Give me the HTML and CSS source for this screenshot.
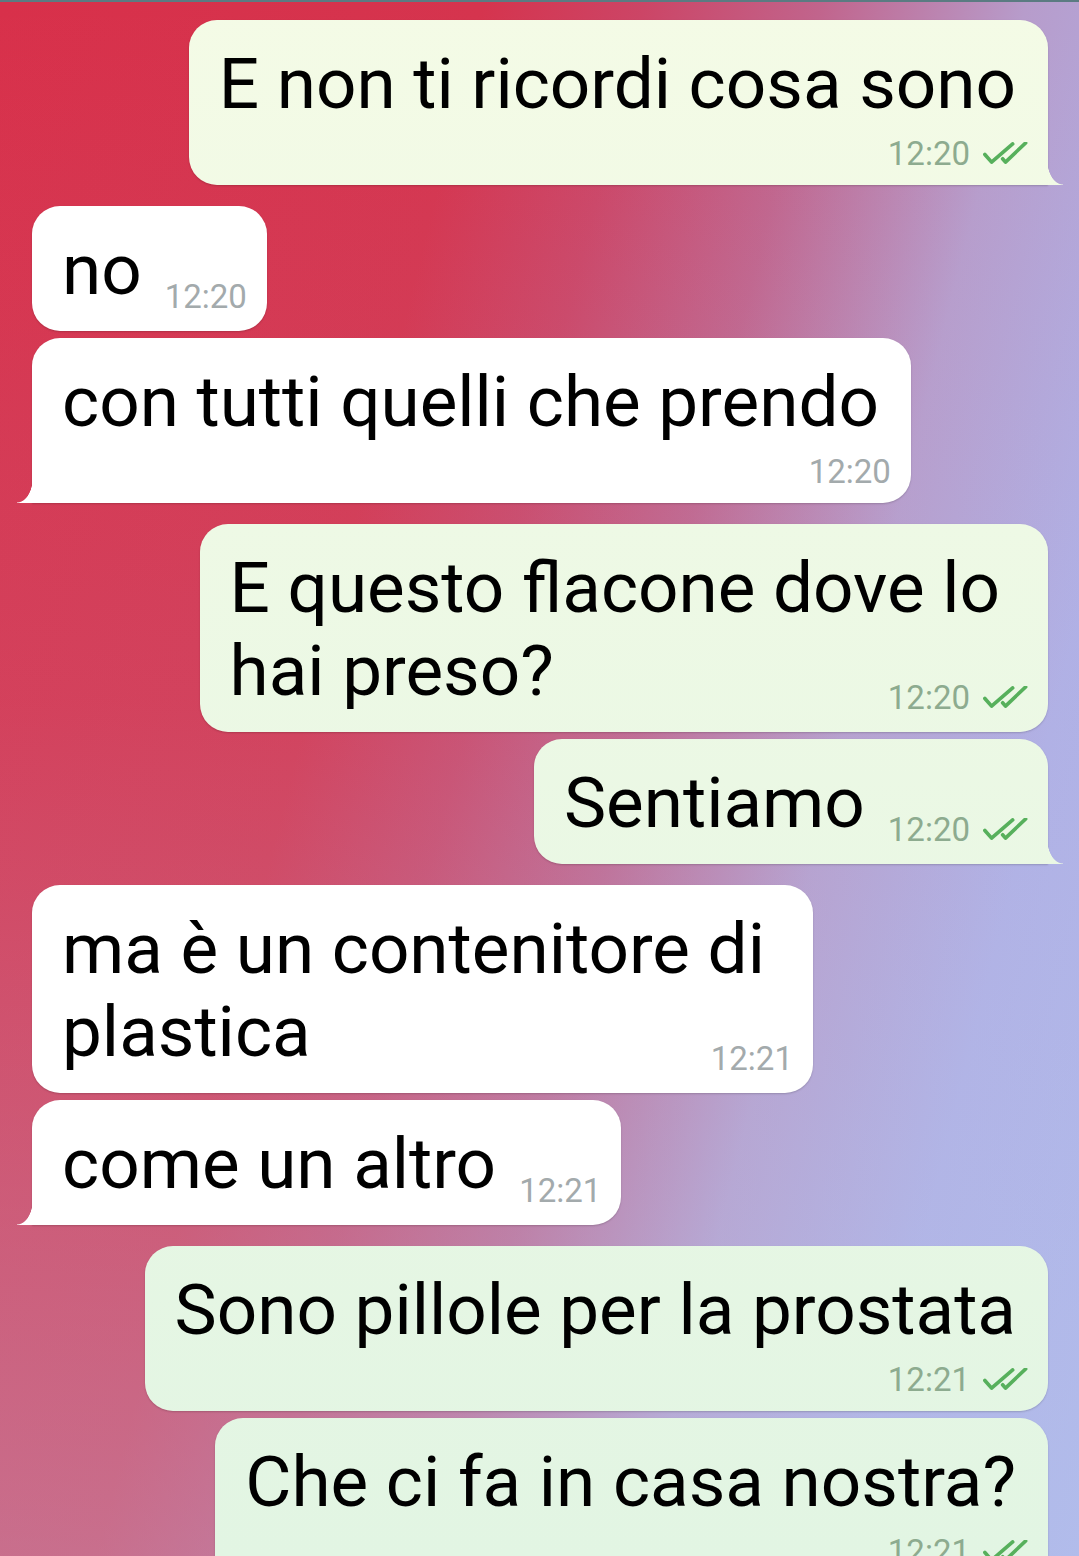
FILE: index.html
```html
<!DOCTYPE html>
<html>
<head>
  <title>Chat</title>
  <link rel="stylesheet" href="styles.css">
</head>
<body>

<div class="chat">

  <div class="msg out tail">
    <div class="text">E non ti ricordi cosa sono</div>
    <div class="meta-row"><span class="time">12:20</span><svg class="checks" viewBox="0 0 48 24"><path d="M3 13 L10 21 L32 2"/><path d="M21.5 17.5 L24.5 21 L45.5 1"/></svg></div>
  </div>

  <div class="msg in first">
    <div class="text">no<span class="meta"><span class="time">12:20</span></span></div>
  </div>
  <div class="msg in tail">
    <div class="text">con tutti quelli che prendo</div>
    <div class="meta-row"><span class="time">12:20</span></div>
  </div>

  <div class="msg out multi first">
    <div class="text">E questo flacone dove lo<br>hai preso?<span class="meta"><span class="time">12:20</span><svg class="checks" viewBox="0 0 48 24"><path d="M3 13 L10 21 L32 2"/><path d="M21.5 17.5 L24.5 21 L45.5 1"/></svg></span></div>
  </div>
  <div class="msg out tail">
    <div class="text">Sentiamo<span class="meta"><span class="time">12:20</span><svg class="checks" viewBox="0 0 48 24"><path d="M3 13 L10 21 L32 2"/><path d="M21.5 17.5 L24.5 21 L45.5 1"/></svg></span></div>
  </div>

  <div class="msg in multi first">
    <div class="text">ma è un contenitore di<br>plastica<span class="meta"><span class="time">12:21</span></span></div>
  </div>
  <div class="msg in tail">
    <div class="text">come un altro<span class="meta"><span class="time">12:21</span></span></div>
  </div>

  <div class="msg out first">
    <div class="text">Sono pillole per la prostata</div>
    <div class="meta-row"><span class="time">12:21</span><svg class="checks" viewBox="0 0 48 24"><path d="M3 13 L10 21 L32 2"/><path d="M21.5 17.5 L24.5 21 L45.5 1"/></svg></div>
  </div>
  <div class="msg out">
    <div class="text">Che ci fa in casa nostra?</div>
    <div class="meta-row"><span class="time">12:21</span><svg class="checks" viewBox="0 0 48 24"><path d="M3 13 L10 21 L32 2"/><path d="M21.5 17.5 L24.5 21 L45.5 1"/></svg></div>
  </div>

</div>

</body>
</html>
```

FILE: styles.css
```css
html, body {
  margin: 0;
  height: 100%;
}
body {
  overflow: hidden;
  border-top: 2px solid #5b7b82;
  box-sizing: border-box;
  font-family: Roboto, "Noto Sans", sans-serif;
  background:
    linear-gradient(to bottom, rgba(181, 200, 236, 0) 0%, rgba(181, 200, 236, 0.1) 45%, rgba(181, 200, 236, 0.4) 100%),
    linear-gradient(104deg, #d8304a 0%, #d5344e 33%, #cc4566 44%, #c1648c 56%, #b79ccb 70%, #b0aee4 84%, #afb4ea 100%);
}

.chat {
  display: flex;
  flex-direction: column;
  padding: 18px 31px 0 32px;
}

/* bubbles */
.msg {
  position: relative;
  max-width: 930px;
  padding: 22px 32px 20px 30px;
  border-radius: 28px;
  box-shadow: 0 1px 2px rgba(0, 0, 0, 0.18);
  white-space: nowrap;
}
.msg.multi {
  padding-right: 48px;
}
.msg + .msg {
  margin-top: 7px;
}
.msg.first {
  margin-top: 21px;
}
.msg.in {
  align-self: flex-start;
  background: #fff;
}
.msg.out {
  align-self: flex-end;
  background: linear-gradient(to bottom, #f4fbe6, #e2f5e3) fixed;
}

/* tails */
.msg.tail.out {
  border-bottom-right-radius: 0;
}
.msg.tail.in {
  border-bottom-left-radius: 0;
}
.msg.tail::after {
  content: "";
  position: absolute;
  bottom: 0;
  width: 16px;
  height: 25px;
  background: inherit;
}
.msg.tail.out::after {
  right: -15px;
  -webkit-mask: radial-gradient(16px 25px at 100% 0, transparent 96%, #000 100%);
  mask: radial-gradient(16px 25px at 100% 0, transparent 96%, #000 100%);
}
.msg.tail.in::after {
  left: -15px;
  -webkit-mask: radial-gradient(16px 25px at 0 0, transparent 96%, #000 100%);
  mask: radial-gradient(16px 25px at 0 0, transparent 96%, #000 100%);
}

.text {
  font-size: 71px;
  line-height: 83px;
  color: #000;
}

/* time + ticks */
.meta, .meta-row {
  font-size: 33px;
  white-space: nowrap;
}
.meta {
  float: right;
  line-height: 28px;
  margin: 55px -12px 0 23px;
}
.multi .meta {
  margin-right: -28px;
}
.meta-row {
  text-align: right;
  line-height: 32px;
  margin: 13px -12px -5px 0;
}
.in .time {
  color: #a3aaac;
}
.out .time {
  color: #8dab8f;
}
.checks {
  width: 46px;
  height: 23px;
  margin-left: 12px;
  vertical-align: baseline;
  fill: none;
  stroke: #57b05c;
  stroke-width: 3.8;
  stroke-linecap: round;
  stroke-linejoin: round;
}
```
